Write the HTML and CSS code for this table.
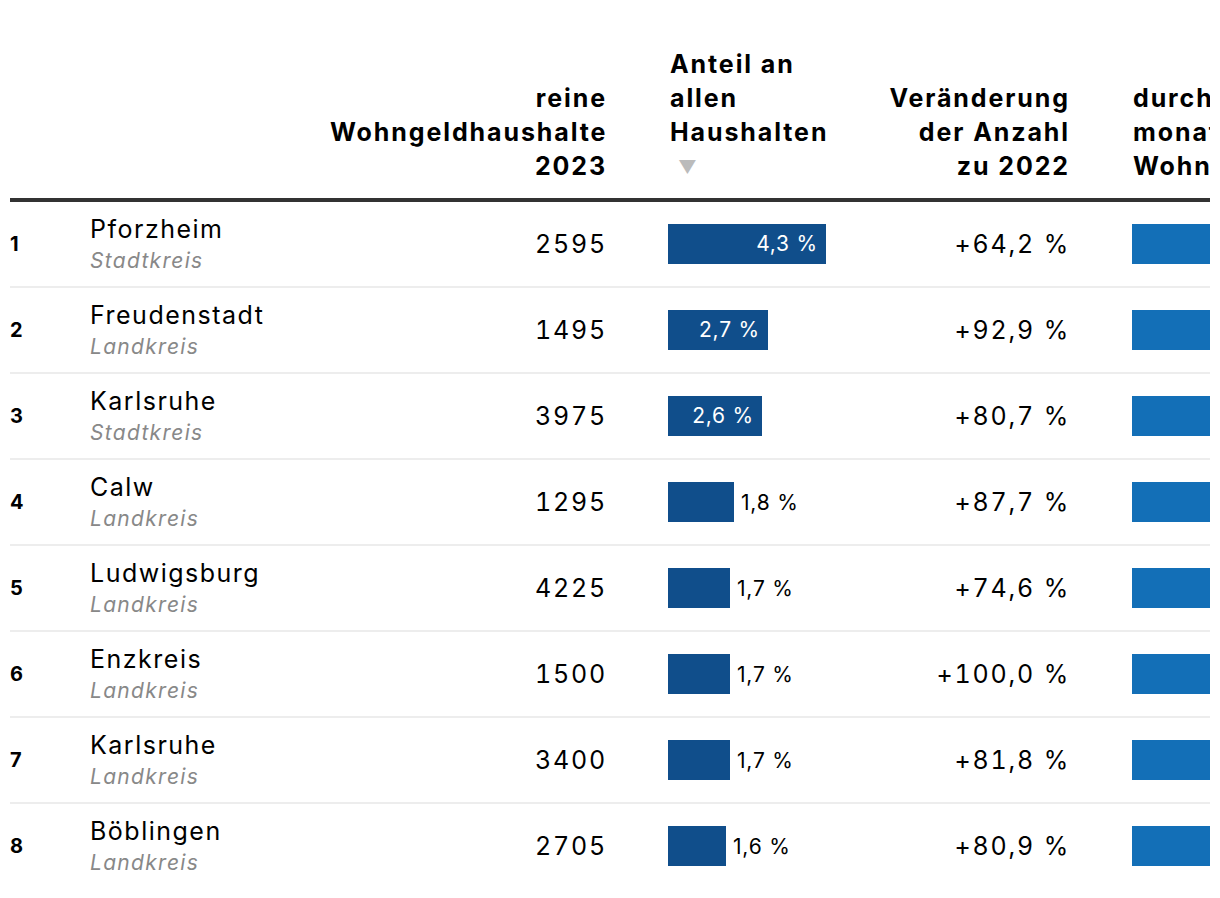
FILE: index.html
```html
<!DOCTYPE html>
<html lang="de">
<head>
<meta charset="utf-8">
<title>Wohngeld</title>
<link rel="stylesheet" href="styles.css">
</head>
<body>
<div class="frame">
  <div class="table">
    <div class="row head">
      <div class="c rank"></div>
      <div class="c name"></div>
      <div class="c num">reine<br>Wohngeldhaushalte<br>2023</div>
      <div class="c bar">Anteil an<br>allen<br>Haushalten<span class="sort">▼</span></div>
      <div class="c chg">Veränderung<br>der Anzahl<br>zu 2022</div>
      <div class="c last">durchschnittlicher<br>monatlicher<br>Wohngeldanspruch</div>
    </div>
    <div class="row">
      <div class="c rank">1</div>
      <div class="c name"><div class="nm">Pforzheim</div><div class="tp">Stadtkreis</div></div>
      <div class="c num">2595</div>
      <div class="c bar"><div class="b in" style="width:158px">4,3 %</div></div>
      <div class="c chg">+64,2 %</div>
      <div class="c last"><div class="b2"></div></div>
    </div>
    <div class="row">
      <div class="c rank">2</div>
      <div class="c name"><div class="nm">Freudenstadt</div><div class="tp">Landkreis</div></div>
      <div class="c num">1495</div>
      <div class="c bar"><div class="b in" style="width:100px">2,7 %</div></div>
      <div class="c chg">+92,9 %</div>
      <div class="c last"><div class="b2"></div></div>
    </div>
    <div class="row">
      <div class="c rank">3</div>
      <div class="c name"><div class="nm">Karlsruhe</div><div class="tp">Stadtkreis</div></div>
      <div class="c num">3975</div>
      <div class="c bar"><div class="b in" style="width:94px">2,6 %</div></div>
      <div class="c chg">+80,7 %</div>
      <div class="c last"><div class="b2"></div></div>
    </div>
    <div class="row">
      <div class="c rank">4</div>
      <div class="c name"><div class="nm">Calw</div><div class="tp">Landkreis</div></div>
      <div class="c num">1295</div>
      <div class="c bar"><div class="b" style="width:66px"></div><span class="out">1,8 %</span></div>
      <div class="c chg">+87,7 %</div>
      <div class="c last"><div class="b2"></div></div>
    </div>
    <div class="row">
      <div class="c rank">5</div>
      <div class="c name"><div class="nm">Ludwigsburg</div><div class="tp">Landkreis</div></div>
      <div class="c num">4225</div>
      <div class="c bar"><div class="b" style="width:62px"></div><span class="out">1,7 %</span></div>
      <div class="c chg">+74,6 %</div>
      <div class="c last"><div class="b2"></div></div>
    </div>
    <div class="row">
      <div class="c rank">6</div>
      <div class="c name"><div class="nm">Enzkreis</div><div class="tp">Landkreis</div></div>
      <div class="c num">1500</div>
      <div class="c bar"><div class="b" style="width:62px"></div><span class="out">1,7 %</span></div>
      <div class="c chg">+100,0 %</div>
      <div class="c last"><div class="b2"></div></div>
    </div>
    <div class="row">
      <div class="c rank">7</div>
      <div class="c name"><div class="nm">Karlsruhe</div><div class="tp">Landkreis</div></div>
      <div class="c num">3400</div>
      <div class="c bar"><div class="b" style="width:62px"></div><span class="out">1,7 %</span></div>
      <div class="c chg">+81,8 %</div>
      <div class="c last"><div class="b2"></div></div>
    </div>
    <div class="row nob">
      <div class="c rank">8</div>
      <div class="c name"><div class="nm">Böblingen</div><div class="tp">Landkreis</div></div>
      <div class="c num">2705</div>
      <div class="c bar"><div class="b" style="width:58px"></div><span class="out">1,6 %</span></div>
      <div class="c chg">+80,9 %</div>
      <div class="c last"><div class="b2"></div></div>
    </div>
  </div>
</div>
</body>
</html>
```

FILE: styles.css
```css
html, body {
  margin: 0;
  padding: 0;
  background: #fff;
}
body {
  font-family: Inter, "Liberation Sans", sans-serif;
  color: #000;
}
.frame {
  margin: 47px 0 0 10px;
  width: 1200px;
  overflow: hidden;
}
.table {
  width: 1400px;
}
.row {
  display: grid;
  grid-template-columns: 80px 240px 275px 283px 180px 300px;
  height: 84px;
  align-items: center;
  border-bottom: 2px solid #ededed;
}
.row.nob {
  border-bottom: none;
}
.row.head {
  height: auto;
  align-items: end;
  border-bottom: 4px solid #333;
  padding-bottom: 15px;
  font-weight: 700;
  font-size: 25px;
  line-height: 34px;
  letter-spacing: 1.9px;
}
.c {
  white-space: nowrap;
}
.num, .chg {
  text-align: right;
  margin-right: -2px;
}
.bar {
  padding-left: 63px;
  display: flex;
  align-items: center;
}
.head .bar {
  display: block;
  padding-left: 65px;
}
.last {
  padding-left: 64px;
}
.head .last {
  padding-left: 65px;
}
.sort {
  display: block;
  height: 34px;
  line-height: 36px;
  color: #bbb;
  font-size: 18px;
  letter-spacing: 0;
  padding-left: 8px;
  overflow: hidden;
}
.rank {
  font-weight: 700;
  font-size: 20px;
}
.name {
  padding-top: 2px;
}
.nm {
  font-size: 25px;
  line-height: 32px;
  letter-spacing: 1.5px;
}
.tp {
  font-size: 21px;
  line-height: 32px;
  letter-spacing: 1.3px;
  font-style: italic;
  color: #888;
}
.row .num, .row .chg {
  font-size: 25px;
  letter-spacing: 1.8px;
  font-variant-numeric: tabular-nums;
}
.row.head .num, .row.head .chg {
  font-size: 25px;
  letter-spacing: 1.9px;
  font-variant-numeric: normal;
}
.b {
  height: 40px;
  background: #104e8b;
  color: #fff;
  font-size: 21px;
  line-height: 40px;
  letter-spacing: 0.8px;
  text-align: right;
  box-sizing: border-box;
  padding-right: 8px;
}
.out {
  font-size: 21px;
  letter-spacing: 0.8px;
  padding-left: 7px;
}
.b2 {
  height: 40px;
  width: 200px;
  background: #136fb7;
}
```
